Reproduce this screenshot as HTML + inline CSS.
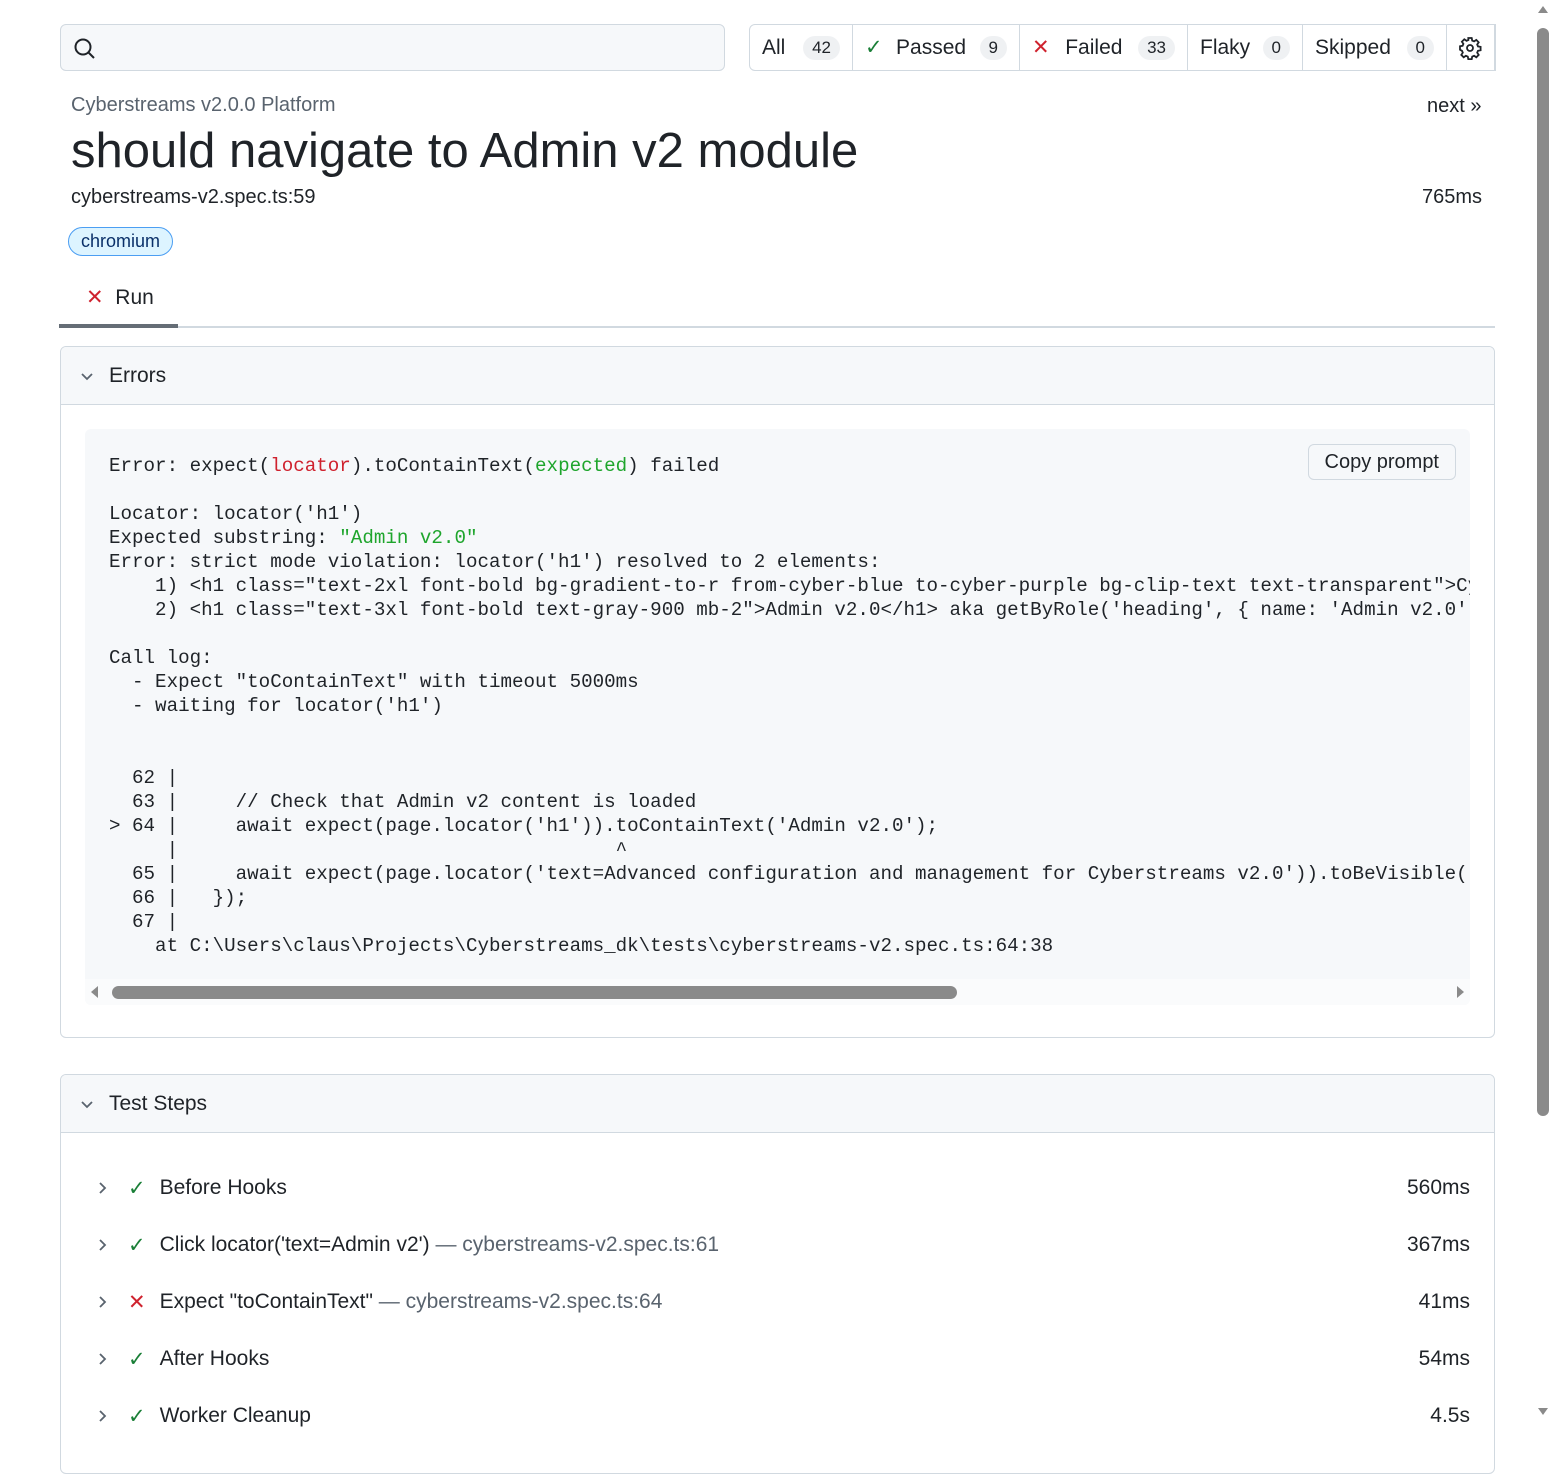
<!DOCTYPE html>
<html><head><meta charset="utf-8"><style>
*{box-sizing:border-box;margin:0;padding:0}
body{width:1554px;height:1422px;overflow:hidden;background:#fff;font-family:"Liberation Sans",sans-serif;color:#1f2328;position:relative}
.abs{position:absolute}
.search{left:60px;top:24px;width:665px;height:47px;border:1px solid #d1d9e0;border-radius:6px;background:#f6f8fa}
.filters{left:749px;top:24px;height:47px;display:flex;border:1px solid #d1d9e0;border-radius:6px 0 0 6px}
.filters div{display:flex;align-items:center;padding:0 12px;font-size:21px;border-right:1px solid #d1d9e0;height:100%;gap:8px;justify-content:space-between}
.cnt{background:#eff1f3;border-radius:14px;font-size:17px;padding:2px 9px}
.mono{font-family:"Liberation Mono",monospace;font-size:19.2px;line-height:24px;white-space:pre;color:#1f2328}
.box{left:60px;width:1435px;border:1px solid #d1d9e0;border-radius:6px;overflow:hidden}
.hdr{height:58px;background:#f6f8fa;border-bottom:1px solid #d1d9e0;display:flex;align-items:center;font-size:21px;padding-left:18px;gap:14px}
.step{position:absolute;left:96px;display:flex;align-items:center;font-size:21px;height:30px}
.step .t{position:absolute;right:0}
.dim{color:#59636e}
</style></head><body>
<div class="abs search"><svg style="position:absolute;left:12px;top:12px" width="24" height="24" viewBox="0 0 24 24" fill="none" stroke="#1f2328" stroke-width="2"><circle cx="10" cy="10" r="7.5"/><path d="M15.5 15.5L21 21"/></svg></div>
<div class="abs filters">
<div style="width:103px">All <span class="cnt">42</span></div>
<div style="width:167px"><span style="color:#1a7f37">✓</span>Passed <span class="cnt">9</span></div>
<div style="width:168px"><span style="color:#cf222e">✕</span>Failed <span class="cnt">33</span></div>
<div style="width:115px">Flaky <span class="cnt">0</span></div>
<div style="width:144px">Skipped <span class="cnt">0</span></div>
<div style="width:48px;padding:0 11px"><svg width="24" height="24" viewBox="0 0 24 24" fill="none" stroke="#1f2328" stroke-width="1.8"><circle cx="12" cy="12" r="3"/><path d="M10.3 2h3.4l.5 2.6 1.9.8 2.2-1.5 2.4 2.4-1.5 2.2.8 1.9 2.6.5v3.4l-2.6.5-.8 1.9 1.5 2.2-2.4 2.4-2.2-1.5-1.9.8-.5 2.6h-3.4l-.5-2.6-1.9-.8-2.2 1.5-2.4-2.4 1.5-2.2-.8-1.9L2 13.7v-3.4l2.6-.5.8-1.9-1.5-2.2 2.4-2.4 2.2 1.5 1.9-.8z"/></svg></div>
</div>
<div class="abs" style="left:1536px;top:0;width:18px;height:1422px;background:#fff"></div>
<div class="abs" style="left:1537px;top:28px;width:12px;height:1088px;background:#8a8a8a;border-radius:6px"></div>
<div class="abs" style="left:1538px;top:6px;border:5px solid transparent;border-bottom:7px solid #8a8a8a;border-top:0"></div>
<div class="abs" style="left:1538px;top:1408px;border:5px solid transparent;border-top:7px solid #8a8a8a;border-bottom:0"></div>

<div class="abs dim" style="left:71px;top:94px;font-size:20px">Cyberstreams v2.0.0 Platform</div>
<div class="abs" style="left:1427px;top:95px;font-size:20px">next »</div>
<div class="abs" style="left:71px;top:123px;font-size:49px">should navigate to Admin v2 module</div>
<div class="abs" style="left:71px;top:186px;font-size:20px">cyberstreams-v2.spec.ts:59</div>
<div class="abs" style="left:1422px;top:186px;font-size:20px">765ms</div>
<div class="abs" style="left:68px;top:227px;height:29px;padding:0 12px;border:1px solid #4c9ef2;border-radius:15px;background:#ddf4ff;color:#0a3069;font-size:18px;line-height:27px">chromium</div>
<div class="abs" style="left:86px;top:285px;font-size:21px"><span style="color:#cf222e">✕</span>&nbsp;&nbsp;Run</div>
<div class="abs" style="left:59px;top:326px;width:1436px;height:2px;background:#d1d9e0"></div>
<div class="abs" style="left:59px;top:324px;width:119px;height:4px;background:#656d76"></div>

<div class="abs box" style="top:346px;height:692px">
<div class="hdr"><svg width="16" height="16" viewBox="0 0 16 16" fill="none" stroke="#59636e" stroke-width="1.8"><path d="M3 6l5 5 5-5"/></svg>Errors</div>
<div style="position:absolute;left:24px;top:82px;right:24px;height:576px;background:#f6f8fa;border-radius:6px;overflow:hidden">
<div style="position:absolute;right:14px;top:15px;height:36px;padding:0 16px;border:1px solid #d1d9e0;border-radius:6px;background:#f6f8fa;font-size:20px;line-height:34px">Copy prompt</div>
<div class="mono" style="position:absolute;left:24px;top:25px">Error: expect(<span style="color:#cf222e">locator</span>).toContainText(<span style="color:#1ea52c">expected</span>) failed

Locator: locator('h1')
Expected substring: <span style="color:#1ea52c">"Admin v2.0"</span>
Error: strict mode violation: locator('h1') resolved to 2 elements:
    1) &lt;h1 class="text-2xl font-bold bg-gradient-to-r from-cyber-blue to-cyber-purple bg-clip-text text-transparent"&gt;Cyb
    2) &lt;h1 class="text-3xl font-bold text-gray-900 mb-2"&gt;Admin v2.0&lt;/h1&gt; aka getByRole('heading', { name: 'Admin v2.0' 

Call log:
  - Expect "toContainText" with timeout 5000ms
  - waiting for locator('h1')


  62 |
  63 |     // Check that Admin v2 content is loaded
&gt; 64 |     await expect(page.locator('h1')).toContainText('Admin v2.0');
     |                                      ^
  65 |     await expect(page.locator('text=Advanced configuration and management for Cyberstreams v2.0')).toBeVisible(
  66 |   });
  67 |
    at C:\Users\claus\Projects\Cyberstreams_dk\tests\cyberstreams-v2.spec.ts:64:38</div>
<div style="position:absolute;left:0;right:0;top:550px;height:26px;background:#fafbfc"></div>
<div style="position:absolute;left:6px;top:557px;border:6px solid transparent;border-right:7px solid #8a8a8a;border-left:0"></div>
<div style="position:absolute;right:6px;top:557px;border:6px solid transparent;border-left:7px solid #8a8a8a;border-right:0"></div>
<div style="position:absolute;left:27px;top:557px;width:845px;height:13px;background:#8a8a8a;border-radius:7px"></div>
</div>
</div>

<div class="abs box" style="top:1074px;height:400px">
<div class="hdr"><svg width="16" height="16" viewBox="0 0 16 16" fill="none" stroke="#59636e" stroke-width="1.8"><path d="M3 6l5 5 5-5"/></svg>Test Steps</div>
</div>
<div class="step" style="top:1173px;width:1374px"><svg width="14" height="16" viewBox="0 0 14 16" fill="none" stroke="#59636e" stroke-width="1.8"><path d="M4 3l5 5-5 5"/></svg><span style="color:#1a7f37;margin:0 14px 0 18px">✓</span>Before Hooks<span class="t">560ms</span></div>
<div class="step" style="top:1230px;width:1374px"><svg width="14" height="16" viewBox="0 0 14 16" fill="none" stroke="#59636e" stroke-width="1.8"><path d="M4 3l5 5-5 5"/></svg><span style="color:#1a7f37;margin:0 14px 0 18px">✓</span>Click locator('text=Admin v2')&nbsp;<span class="dim">— cyberstreams-v2.spec.ts:61</span><span class="t">367ms</span></div>
<div class="step" style="top:1287px;width:1374px"><svg width="14" height="16" viewBox="0 0 14 16" fill="none" stroke="#59636e" stroke-width="1.8"><path d="M4 3l5 5-5 5"/></svg><span style="color:#cf222e;margin:0 14px 0 18px">✕</span>Expect "toContainText"&nbsp;<span class="dim">— cyberstreams-v2.spec.ts:64</span><span class="t">41ms</span></div>
<div class="step" style="top:1344px;width:1374px"><svg width="14" height="16" viewBox="0 0 14 16" fill="none" stroke="#59636e" stroke-width="1.8"><path d="M4 3l5 5-5 5"/></svg><span style="color:#1a7f37;margin:0 14px 0 18px">✓</span>After Hooks<span class="t">54ms</span></div>
<div class="step" style="top:1401px;width:1374px"><svg width="14" height="16" viewBox="0 0 14 16" fill="none" stroke="#59636e" stroke-width="1.8"><path d="M4 3l5 5-5 5"/></svg><span style="color:#1a7f37;margin:0 14px 0 18px">✓</span>Worker Cleanup<span class="t">4.5s</span></div>
</body></html>
